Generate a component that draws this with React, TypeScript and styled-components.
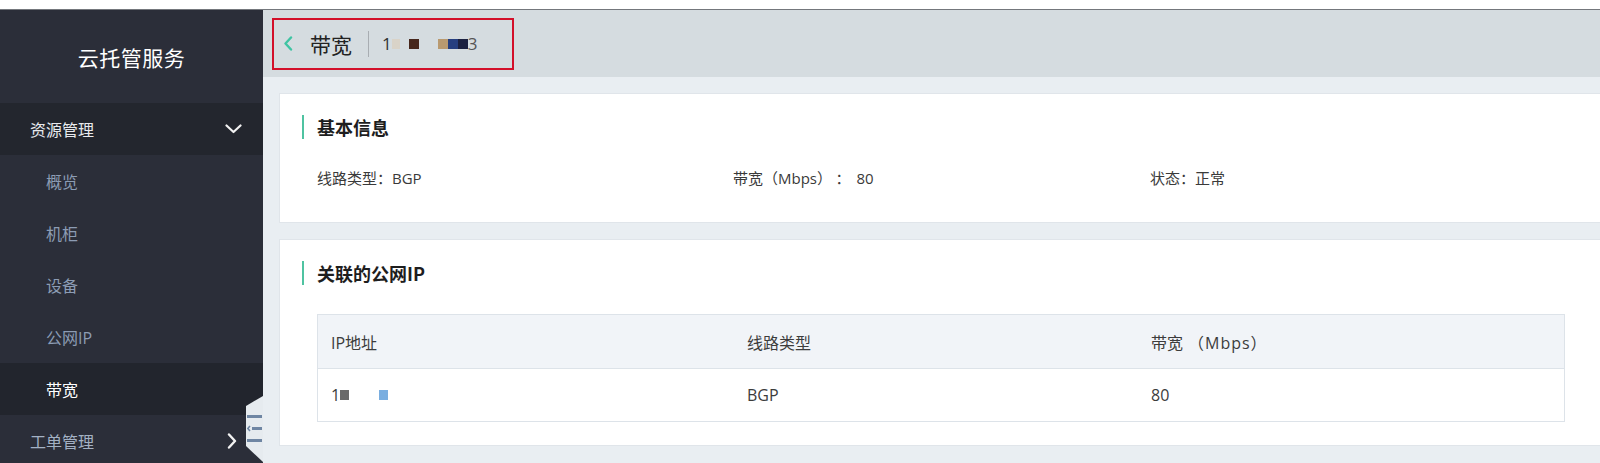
import React from "react";
import styled, { createGlobalStyle } from "styled-components";

const GlobalStyle = createGlobalStyle`
  html, body { margin: 0; padding: 0; background: #ffffff; }
  body {
    font-family: "Open Sans", "Noto Sans CJK SC", sans-serif;
    -webkit-font-smoothing: antialiased;
  }
  * { box-sizing: border-box; }
`;

const Page = styled.div`
  width: 1600px;
  height: 463px;
  display: flex;
  flex-direction: column;
  overflow: hidden;
`;

const TopStrip = styled.div`
  height: 10px;
  flex: none;
  background: #ffffff;
  border-bottom: 1px solid #74777c;
`;

const Body = styled.div`
  flex: 1;
  display: flex;
  min-height: 0;
`;

const Sidebar = styled.aside`
  position: relative;
  width: 263px;
  flex: none;
  background: #2b2e39;
  display: flex;
  flex-direction: column;
`;

const Logo = styled.div`
  height: 93px;
  flex: none;
  display: flex;
  align-items: center;
  justify-content: center;
  color: #ffffff;
  font-family: "Noto Sans CJK SC", sans-serif;
  font-size: 21px;
  letter-spacing: 0.5px;
`;

const GroupHeader = styled.div<{ $open?: boolean }>`
  height: 52px;
  flex: none;
  display: flex;
  align-items: center;
  justify-content: space-between;
  padding: 0 21px 0 30px;
  background: ${(p) => (p.$open ? "#23262e" : "#2b2e39")};
  color: ${(p) => (p.$open ? "#e8eaee" : "#a3b1c4")};
  font-family: "Noto Sans CJK SC", sans-serif;
  font-size: 16px;
`;

const SubItem = styled.div<{ $active?: boolean }>`
  height: 52px;
  flex: none;
  display: flex;
  align-items: center;
  padding-left: 46px;
  background: ${(p) => (p.$active ? "#22252d" : "#2b2e39")};
  color: ${(p) => (p.$active ? "#ffffff" : "#8c9cb4")};
  font-family: "Open Sans", "Noto Sans CJK SC", sans-serif;
  font-size: 16px;
`;

const RightArrow = styled.span`
  display: inline-flex;
  margin-right: 5px;
`;

const CollapseHandle = styled.div`
  position: absolute;
  right: 0;
  bottom: 1px;
  width: 17px;
  height: 66px;
  background: #e6ebef;
  clip-path: polygon(0 10px, 100% 0, 100% 100%, 0 50px);
  display: flex;
  align-items: center;
  justify-content: flex-end;
  padding-right: 1px;
`;

const Main = styled.main`
  flex: 1;
  min-width: 0;
  background: #e9eef2;
  display: flex;
  flex-direction: column;
  overflow: hidden;
`;

const Header = styled.header`
  height: 67px;
  flex: none;
  background: #d5dce0;
  display: flex;
  align-items: center;
  padding-left: 9px;
`;

const HighlightBox = styled.div`
  width: 242px;
  height: 52px;
  border: 2px solid #d3102a;
  display: flex;
  align-items: center;
  padding-left: 9px;
`;

const BackIcon = styled.span`
  display: inline-flex;
  width: 12px;
  margin-right: 15px;
`;

const HeaderTitle = styled.span`
  font-family: "Noto Sans CJK SC", sans-serif;
  font-size: 21px;
  color: #222222;
`;

const Divider = styled.span`
  width: 1px;
  height: 26px;
  background: #a8adb2;
  margin: 0 13px 0 16px;
`;

const MaskedValue = styled.span`
  display: inline-flex;
  align-items: center;
  font-size: 17px;
  color: #333333;
`;

const Mask = styled.span<{ $w: number; $c: string; $gap?: number }>`
  display: inline-block;
  width: ${(p) => p.$w}px;
  height: 10px;
  background: ${(p) => p.$c};
  margin-left: ${(p) => p.$gap ?? 0}px;
`;

const Content = styled.div`
  flex: none;
  padding: 16px 0 0 16px;
  display: flex;
  flex-direction: column;
  gap: 16px;
`;

const Card = styled.section<{ $pt: number; $pb: number }>`
  flex: none;
  background: #ffffff;
  border: 1px solid #e0e5ea;
  border-right: none;
  padding: ${(p) => p.$pt}px 35px ${(p) => p.$pb}px 22px;
`;

const CardTitle = styled.h2`
  margin: 0;
  height: 24px;
  display: flex;
  align-items: center;
  border-left: 2px solid #4fc3a1;
  padding-left: 13px;
  font-family: "Noto Sans CJK SC", sans-serif;
  font-size: 18px;
  font-weight: 700;
  color: #1e1e1e;
`;

const InfoRow = styled.div`
  margin-top: 29px;
  padding-left: 15px;
  display: grid;
  grid-template-columns: 416px 417px 1fr;
  font-size: 15px;
  line-height: 20px;
  color: #3a3a3a;
`;

const Colon = styled.span`
  margin: 0 6px 0 11px;
`;

const Table = styled.div`
  margin: 29px 0 0 15px;
  border: 1px solid #dde3e9;
`;

const TableRow = styled.div<{ $head?: boolean }>`
  display: grid;
  grid-template-columns: 416px 404px 1fr;
  height: ${(p) => (p.$head ? 54 : 52)}px;
  align-items: center;
  background: ${(p) => (p.$head ? "#f1f4f8" : "#ffffff")};
  border-bottom: ${(p) => (p.$head ? "1px solid #dde3e9" : "none")};
  font-size: 16px;
  color: #3c3c3c;
`;

const Cell = styled.div`
  padding-left: 13px;
  display: flex;
  align-items: center;
`;

const Unit = styled.span`
  margin-left: 5px;
  letter-spacing: 1px;
`;

const ChevronDown = () => (
  <svg width="17" height="10" viewBox="0 0 17 10" fill="none">
    <polyline points="1.5,1.5 8.5,8 15.5,1.5" stroke="#f2f2f2" strokeWidth="2.2" strokeLinecap="round" strokeLinejoin="round" />
  </svg>
);

const ChevronRight = () => (
  <svg width="10" height="16" viewBox="0 0 10 16" fill="none">
    <polyline points="2,1.5 8,8 2,14.5" stroke="#f2f2f2" strokeWidth="2.4" strokeLinecap="round" strokeLinejoin="round" />
  </svg>
);

const BackChevron = () => (
  <svg width="10" height="15" viewBox="0 0 10 15" fill="none">
    <polyline points="8,1.5 2.5,7.5 8,13.5" stroke="#3fc4a3" strokeWidth="2.4" strokeLinecap="round" strokeLinejoin="round" />
  </svg>
);

const IndentIcon = () => (
  <svg width="15" height="28" viewBox="0 0 15 28" fill="none">
    <rect x="0" y="0" width="15" height="3" fill="#6f86a3" />
    <rect x="5" y="12" width="10" height="3" fill="#6f86a3" />
    <polyline points="3,11 0.8,13.5 3,16" stroke="#6f86a3" strokeWidth="1.6" fill="none" />
    <rect x="0" y="24" width="15" height="3" fill="#6f86a3" />
  </svg>
);

export default function App() {
  return (
    <>
      <GlobalStyle />
      <Page>
        <TopStrip />
        <Body>
          <Sidebar>
            <Logo>云托管服务</Logo>
            <GroupHeader $open>
              <span>资源管理</span>
              <ChevronDown />
            </GroupHeader>
            <SubItem>概览</SubItem>
            <SubItem>机柜</SubItem>
            <SubItem>设备</SubItem>
            <SubItem>公网IP</SubItem>
            <SubItem $active>带宽</SubItem>
            <GroupHeader>
              <span>工单管理</span>
              <RightArrow>
                <ChevronRight />
              </RightArrow>
            </GroupHeader>
            <CollapseHandle>
              <IndentIcon />
            </CollapseHandle>
          </Sidebar>
          <Main>
            <Header>
              <HighlightBox>
                <BackIcon>
                  <BackChevron />
                </BackIcon>
                <HeaderTitle>带宽</HeaderTitle>
                <Divider />
                <MaskedValue>
                  1
                  <Mask $w={8} $c="#d9d3c8" />
                  <Mask $w={10} $c="#47271c" $gap={9} />
                  <Mask $w={10} $c="#b99a70" $gap={19} />
                  <Mask $w={10} $c="#263f80" />
                  <Mask $w={10} $c="#1c2140" />
                  <span style={{ color: "#555" }}>3</span>
                </MaskedValue>
              </HighlightBox>
            </Header>
            <Content>
              <Card $pt={21} $pb={34}>
                <CardTitle>基本信息</CardTitle>
                <InfoRow>
                  <span>线路类型：BGP</span>
                  <span>
                    带宽（Mbps）<Colon>：</Colon>80
                  </span>
                  <span>状态：正常</span>
                </InfoRow>
              </Card>
              <Card $pt={21} $pb={23}>
                <CardTitle>关联的公网IP</CardTitle>
                <Table>
                  <TableRow $head>
                    <Cell>IP地址</Cell>
                    <Cell>线路类型</Cell>
                    <Cell>
                      带宽<Unit>（Mbps）</Unit>
                    </Cell>
                  </TableRow>
                  <TableRow>
                    <Cell>
                      1
                      <Mask $w={9} $c="#6a6a6a" />
                      <Mask $w={9} $c="#7aaee0" $gap={30} />
                    </Cell>
                    <Cell>BGP</Cell>
                    <Cell>80</Cell>
                  </TableRow>
                </Table>
              </Card>
            </Content>
          </Main>
        </Body>
      </Page>
    </>
  );
}
